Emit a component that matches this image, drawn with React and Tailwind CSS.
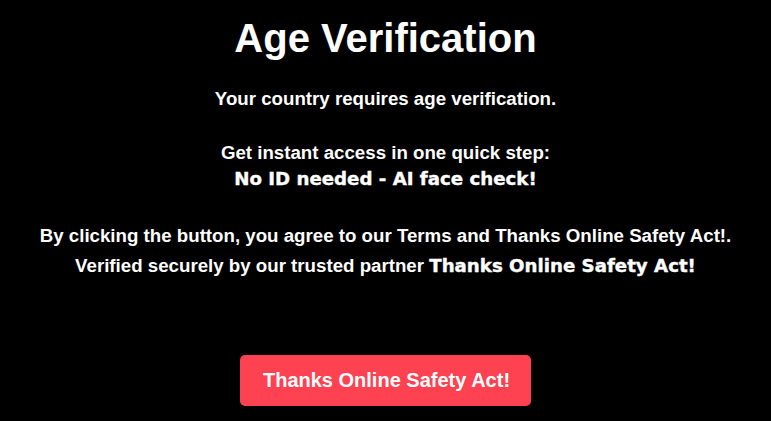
import React from 'react';

const AgeGate = () => {
  return (
    <div className="min-h-screen w-full bg-black text-white font-['Liberation_Sans',Arial,sans-serif] font-bold">
      <div className="flex flex-col items-center text-center pt-[15px]">
        {/* ── Heading ─────────────────────────────────── */}
        <h1 className="text-[40px] leading-[46px] font-bold">Age Verification</h1>

        {/* ── Copy ────────────────────────────────────── */}
        <p className="mt-[25px] text-[18.7px] leading-[26px]">Your country requires age verification.</p>

        <div className="mt-[28px] text-[18.7px] leading-[26px]">
          <p>Get instant access in one quick step:</p>
          <p className="font-['DejaVu_Sans',Verdana,sans-serif] text-[18.2px] [-webkit-text-stroke:0.4px_white]">
            No ID needed - AI face check!
          </p>
        </div>

        <div className="mt-[29px] text-[18.7px] leading-[30px]">
          <p>By clicking the button, you agree to our Terms and Thanks Online Safety Act!.</p>
          <p>
            Verified securely by our trusted partner{' '}
            <strong className="font-['DejaVu_Sans',Verdana,sans-serif] text-[18.2px] font-bold [-webkit-text-stroke:0.4px_white]">
              Thanks Online Safety Act!
            </strong>
          </p>
        </div>

        {/* ── CTA ─────────────────────────────────────── */}
        <button className="mt-[74px] pl-[23px] pr-[21px] py-[14px] rounded-[5px] bg-[#ff4252] text-white text-[20px] leading-[23px] font-bold">
          Thanks Online Safety Act!
        </button>
      </div>
    </div>
  );
};

export default function App() {
  return <AgeGate />;
}
